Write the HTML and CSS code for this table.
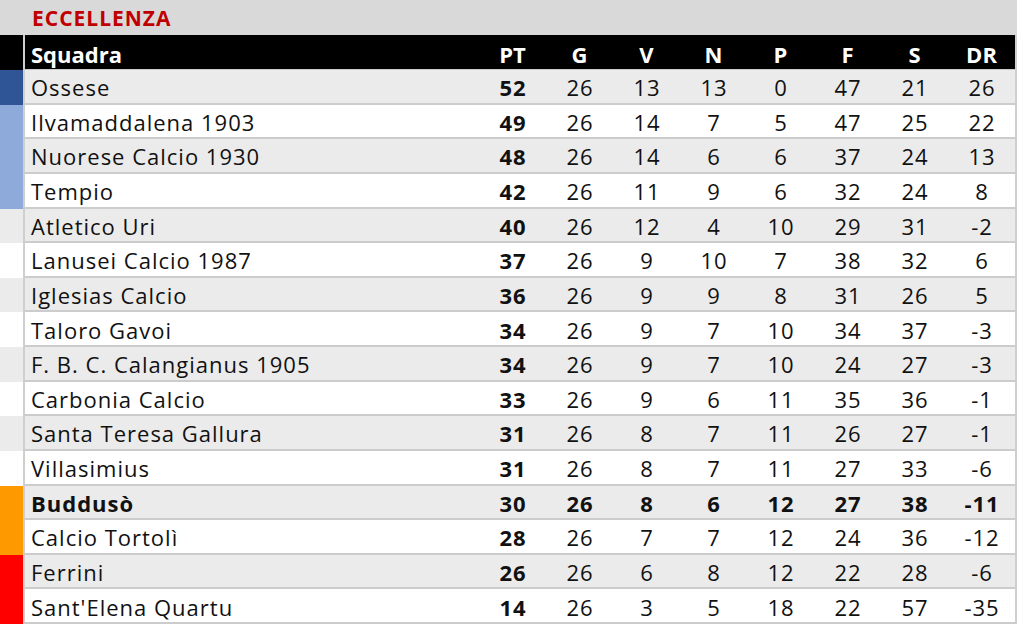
FILE: index.html
```html
<!DOCTYPE html>
<html lang="it">
<head>
<meta charset="utf-8">
<title>Eccellenza</title>
<link rel="stylesheet" href="styles.css">
</head>
<body>
<div class="sheet">
  <div class="title-row"><div class="title">ECCELLENZA</div></div>

  <div class="row head">
    <div class="mark m-black"></div>
    <div class="cells">
      <div class="name">Squadra</div><div>PT</div><div>G</div><div>V</div><div>N</div><div>P</div><div>F</div><div>S</div><div>DR</div>
    </div>
  </div>

  <div class="row odd"><div class="mark m-dblue"></div><div class="cells"><div class="name">Ossese</div><div class="b">52</div><div>26</div><div>13</div><div>13</div><div>0</div><div>47</div><div>21</div><div>26</div></div></div>
  <div class="row even"><div class="mark m-lblue"></div><div class="cells"><div class="name">Ilvamaddalena 1903</div><div class="b">49</div><div>26</div><div>14</div><div>7</div><div>5</div><div>47</div><div>25</div><div>22</div></div></div>
  <div class="row odd"><div class="mark m-lblue"></div><div class="cells"><div class="name">Nuorese Calcio 1930</div><div class="b">48</div><div>26</div><div>14</div><div>6</div><div>6</div><div>37</div><div>24</div><div>13</div></div></div>
  <div class="row even"><div class="mark m-lblue"></div><div class="cells"><div class="name">Tempio</div><div class="b">42</div><div>26</div><div>11</div><div>9</div><div>6</div><div>32</div><div>24</div><div>8</div></div></div>
  <div class="row odd"><div class="mark"></div><div class="cells"><div class="name">Atletico Uri</div><div class="b">40</div><div>26</div><div>12</div><div>4</div><div>10</div><div>29</div><div>31</div><div>-2</div></div></div>
  <div class="row even"><div class="mark"></div><div class="cells"><div class="name">Lanusei Calcio 1987</div><div class="b">37</div><div>26</div><div>9</div><div>10</div><div>7</div><div>38</div><div>32</div><div>6</div></div></div>
  <div class="row odd"><div class="mark"></div><div class="cells"><div class="name">Iglesias Calcio</div><div class="b">36</div><div>26</div><div>9</div><div>9</div><div>8</div><div>31</div><div>26</div><div>5</div></div></div>
  <div class="row even"><div class="mark"></div><div class="cells"><div class="name">Taloro Gavoi</div><div class="b">34</div><div>26</div><div>9</div><div>7</div><div>10</div><div>34</div><div>37</div><div>-3</div></div></div>
  <div class="row odd"><div class="mark"></div><div class="cells"><div class="name">F. B. C. Calangianus 1905</div><div class="b">34</div><div>26</div><div>9</div><div>7</div><div>10</div><div>24</div><div>27</div><div>-3</div></div></div>
  <div class="row even"><div class="mark"></div><div class="cells"><div class="name">Carbonia Calcio</div><div class="b">33</div><div>26</div><div>9</div><div>6</div><div>11</div><div>35</div><div>36</div><div>-1</div></div></div>
  <div class="row odd"><div class="mark"></div><div class="cells"><div class="name">Santa Teresa Gallura</div><div class="b">31</div><div>26</div><div>8</div><div>7</div><div>11</div><div>26</div><div>27</div><div>-1</div></div></div>
  <div class="row even"><div class="mark"></div><div class="cells"><div class="name">Villasimius</div><div class="b">31</div><div>26</div><div>8</div><div>7</div><div>11</div><div>27</div><div>33</div><div>-6</div></div></div>
  <div class="row odd bold"><div class="mark m-orange"></div><div class="cells"><div class="name">Buddusò</div><div>30</div><div>26</div><div>8</div><div>6</div><div>12</div><div>27</div><div>38</div><div>-11</div></div></div>
  <div class="row even"><div class="mark m-orange"></div><div class="cells"><div class="name">Calcio Tortolì</div><div class="b">28</div><div>26</div><div>7</div><div>7</div><div>12</div><div>24</div><div>36</div><div>-12</div></div></div>
  <div class="row odd"><div class="mark m-red"></div><div class="cells"><div class="name">Ferrini</div><div class="b">26</div><div>26</div><div>6</div><div>8</div><div>12</div><div>22</div><div>28</div><div>-6</div></div></div>
  <div class="row even"><div class="mark m-red"></div><div class="cells"><div class="name">Sant'Elena Quartu</div><div class="b">14</div><div>26</div><div>3</div><div>5</div><div>18</div><div>22</div><div>57</div><div>-35</div></div></div>
</div>
</body>
</html>
```
FILE: styles.css
```css
* { box-sizing: border-box; }
html, body { margin: 0; padding: 0; background: #ffffff; }
body {
  font-family: "Open Sans", Lato, sans-serif;
  font-size: 22px;
  letter-spacing: 1px;
  color: #111111;
}
.sheet { width: 1018px; }

.title-row {
  height: 35px;
  width: 1017px;
  background: #d9d9d9;
  padding-left: 32px;
  display: flex;
  align-items: flex-end;
}
.title {
  color: #c00000;
  font-weight: 700;
  font-size: 21px;
  letter-spacing: 1px;
  line-height: 1;
  padding-bottom: 6px;
}

.row {
  display: flex;
  height: 34.625px;
}
.row.head { height: 35px; }

.mark { width: 23px; flex: none; }
.m-black { background: #000000; }
.m-dblue { background: #2f5597; }
.m-lblue { background: #8eaadb; }
.m-orange { background: #ff9900; }
.m-red { background: #ff0000; }

.cells {
  flex: none;
  width: 994px;
  display: grid;
  grid-template-columns: 454px repeat(8, 67px);
  border-left: 2px solid #cfcfcf;
  border-right: 2px solid #cfcfcf;
  border-bottom: 2px solid #cccccc;
}
.cells > div {
  display: flex;
  align-items: flex-end;
  justify-content: center;
  padding-bottom: 4.5px;
  padding-left: 1px;
  line-height: 1;
  white-space: nowrap;
}
.cells > .name { justify-content: flex-start; padding-left: 6px; }

.odd .cells { background: #ebebeb; }
.odd .mark:not([class*=" m-"]) { background: #ebebeb; }
.even .cells { background: #ffffff; }

.head .cells {
  background: #000000;
  color: #ffffff;
  font-weight: 700;
  letter-spacing: 0;
  border-bottom: 1px solid #cccccc;
}
.head .cells > div { padding-left: 0; }
.head .cells > .name { padding-left: 6px; }
.b { font-weight: 700; }
.bold .cells { font-weight: 700; }
```
